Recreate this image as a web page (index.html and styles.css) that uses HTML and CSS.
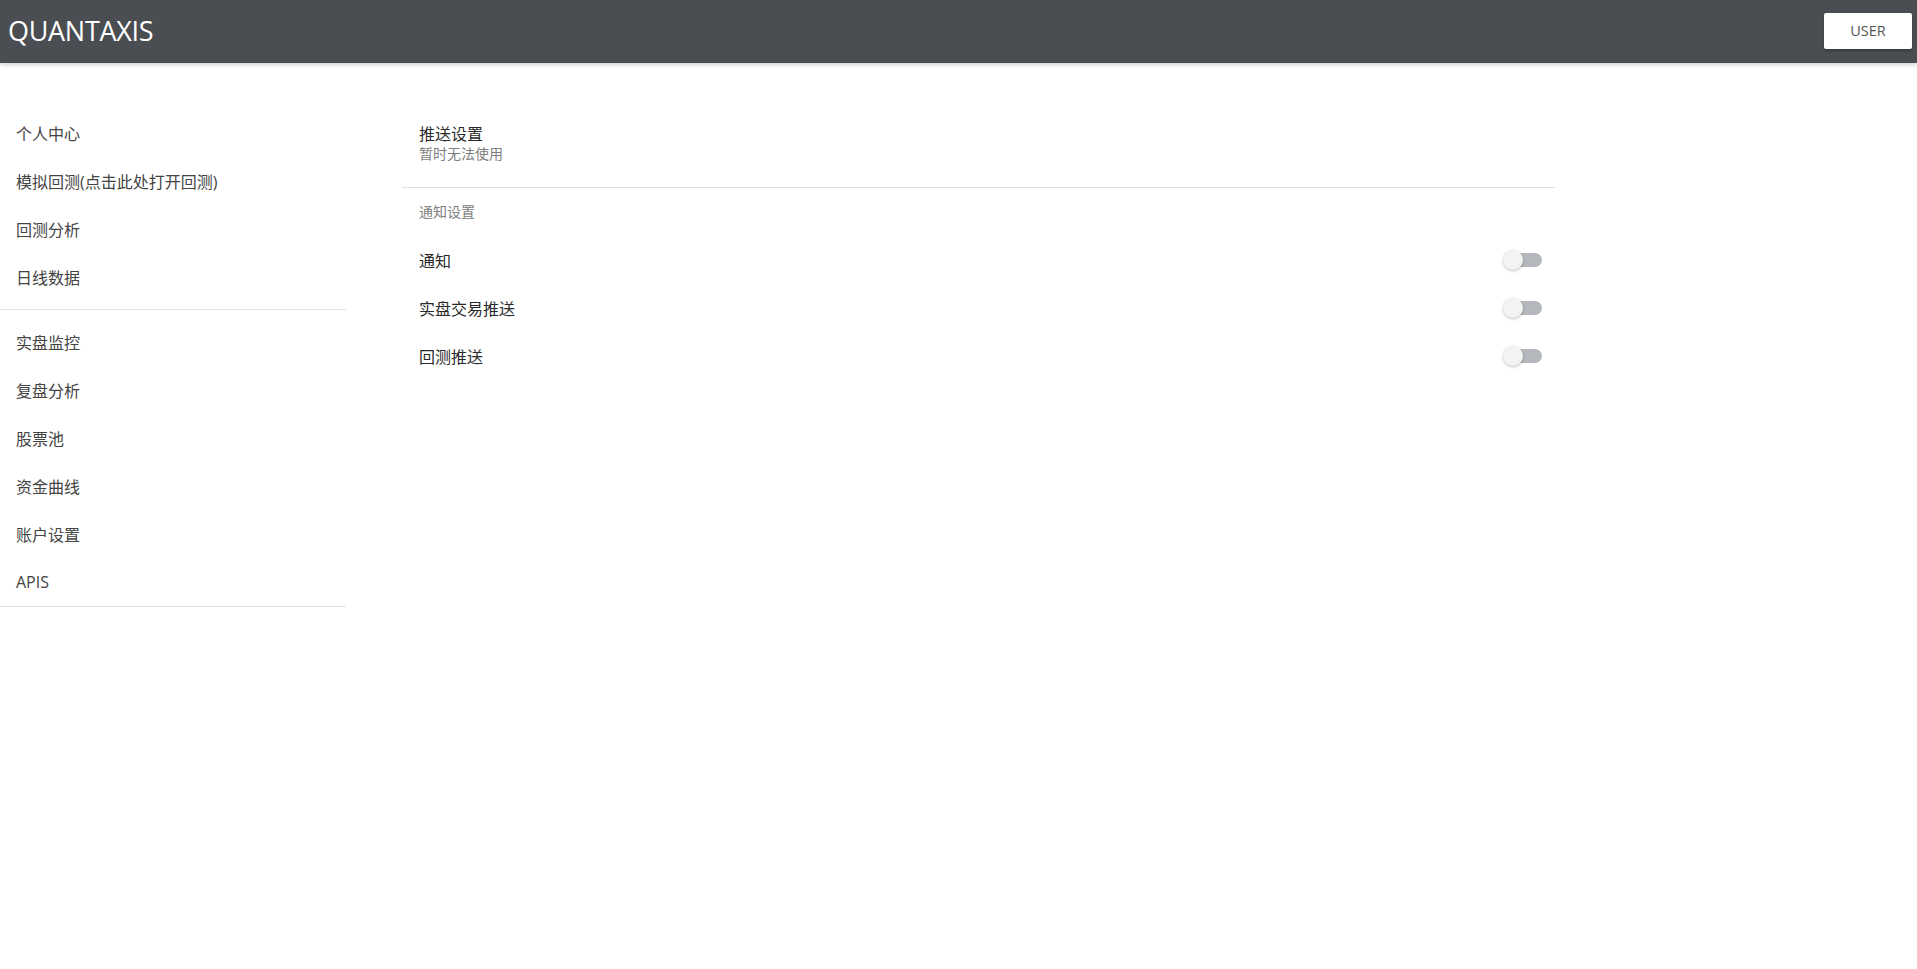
FILE: index.html
```html
<!DOCTYPE html>
<html lang="zh-CN">
<head>
<meta charset="utf-8">
<title>QUANTAXIS</title>
<link rel="stylesheet" href="styles.css">
</head>
<body>
<header class="topbar">
  <div class="brand">QUANTAXIS</div>
  <button class="user-btn">USER</button>
</header>
<main class="layout">
  <nav class="sidebar">
    <ul class="nav-list">
      <li class="nav-item">个人中心</li>
      <li class="nav-item">模拟回测(点击此处打开回测)</li>
      <li class="nav-item">回测分析</li>
      <li class="nav-item">日线数据</li>
    </ul>
    <hr class="divider">
    <ul class="nav-list nav-list-second">
      <li class="nav-item">实盘监控</li>
      <li class="nav-item">复盘分析</li>
      <li class="nav-item">股票池</li>
      <li class="nav-item">资金曲线</li>
      <li class="nav-item">账户设置</li>
      <li class="nav-item">APIS</li>
    </ul>
    <hr class="divider">
  </nav>
  <section class="content">
    <div class="two-line">
      <div class="title">推送设置</div>
      <div class="subtitle">暂时无法使用</div>
    </div>
    <hr class="divider">
    <div class="subheader">通知设置</div>
    <div class="setting-row">
      <span class="setting-label">通知</span>
      <span class="switch"><span class="track"></span><span class="thumb"></span></span>
    </div>
    <div class="setting-row">
      <span class="setting-label">实盘交易推送</span>
      <span class="switch"><span class="track"></span><span class="thumb"></span></span>
    </div>
    <div class="setting-row">
      <span class="setting-label">回测推送</span>
      <span class="switch"><span class="track"></span><span class="thumb"></span></span>
    </div>
  </section>
</main>
</body>
</html>
```
FILE: styles.css
```css
* { box-sizing: border-box; }
html, body { margin: 0; padding: 0; background: #fff; }
body {
  font-family: "Open Sans", "Noto Sans CJK SC", sans-serif;
  color: #3a3a3a;
}
.topbar {
  height: 63px;
  background: #4a4d52;
  display: flex;
  align-items: center;
  justify-content: space-between;
  padding: 0 5px 0 8px;
  box-shadow: 0 2px 4px rgba(0,0,0,0.18);
  position: relative;
  z-index: 1;
}
.brand {
  color: #fff;
  font-size: 27px;
  font-family: "Open Sans", sans-serif;
  letter-spacing: -0.3px;
  margin-top: -2px;
}
.user-btn {
  width: 88px;
  height: 36px;
  background: #fff;
  border: 0;
  border-radius: 2px;
  box-shadow: 0 2px 3px rgba(0,0,0,0.25);
  color: #555;
  font-family: "Open Sans", sans-serif;
  font-size: 14.5px;
  padding: 0 0 2px;
  margin-top: -1px;
}
.layout {
  display: grid;
  grid-template-columns: 346px 1153px;
  column-gap: 56px;
  padding-top: 36px;
}
.sidebar { padding-top: 2px; }
.nav-list {
  list-style: none;
  margin: 0;
  padding: 8px 0;
}
.nav-list-second { padding-bottom: 0; }
.nav-item {
  height: 48px;
  display: flex;
  align-items: center;
  padding: 0 16px;
  font-size: 16px;
  color: #444;
}
.divider {
  border: 0;
  border-top: 1px solid #e0e0e0;
  margin: 0;
  height: 0;
}
.content { padding-top: 8px; }
.two-line {
  height: 72px;
  padding: 0 17px;
  display: flex;
  flex-direction: column;
  justify-content: center;
  margin-bottom: 8px;
}
.title { font-size: 16px; color: #2a2a2a; line-height: 22px; }
.subtitle { font-size: 14px; color: #808080; line-height: 18px; }
.subheader {
  height: 48px;
  display: flex;
  align-items: center;
  padding: 0 17px 2px;
  font-size: 14px;
  color: #808080;
}
.setting-row {
  height: 48px;
  display: flex;
  align-items: center;
  justify-content: space-between;
  padding: 0 13px 0 17px;
}
.setting-label { font-size: 16px; color: #2a2a2a; }
.switch {
  position: relative;
  width: 39px;
  height: 20px;
  display: inline-block;
}
.track {
  position: absolute;
  right: 0;
  top: 3px;
  width: 34px;
  height: 14px;
  border-radius: 7px;
  background: #b5b8bd;
}
.thumb {
  position: absolute;
  left: 0;
  top: 0;
  width: 20px;
  height: 20px;
  border-radius: 50%;
  background: #f3f3f3;
  box-shadow: 0 1px 3px rgba(0,0,0,0.25);
}
```
